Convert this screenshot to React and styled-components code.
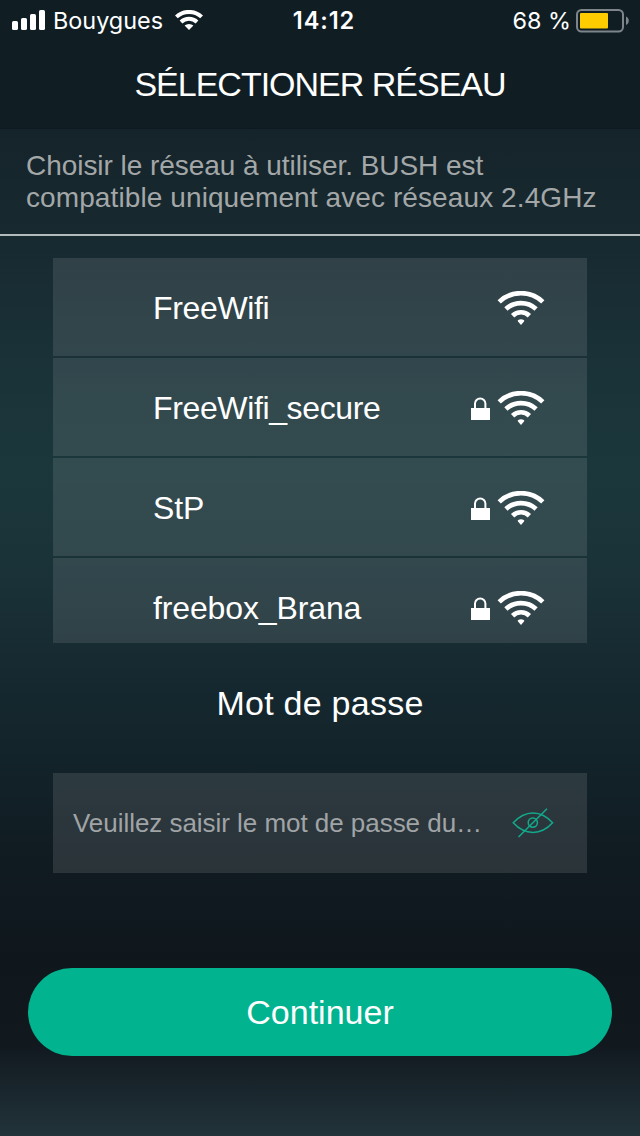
import React from 'react'
import styled, { createGlobalStyle } from 'styled-components'

const networks = [
  { name: 'FreeWifi', locked: false, spacing: '-0.35px' },
  { name: 'FreeWifi_secure', locked: true, spacing: '-0.37px' },
  { name: 'StP', locked: true, spacing: '-0.1px' },
  { name: 'freebox_Brana', locked: true, spacing: '-0.13px' },
]

const SignalIcon = () => (
  <svg width="34" height="20" viewBox="0 0 34 20" fill="#fff">
    <rect x="0" y="11" width="6" height="9" rx="1.6" />
    <rect x="9" y="8" width="6" height="12" rx="1.6" />
    <rect x="18" y="4" width="6" height="16" rx="1.6" />
    <rect x="27" y="0" width="6" height="20" rx="1.6" />
  </svg>
)

const StatusWifiIcon = () => (
  <svg width="28" height="20" viewBox="0 0 28 20" fill="none" stroke="#fff" strokeWidth="4">
    <path d="M1.4 6.9a18.4 18.4 0 0 1 25.2 0" />
    <path d="M6 11.9a12 12 0 0 1 16 0" />
    <path d="M14 20l-4.4-4.4a6.6 6.6 0 0 1 8.8 0z" fill="#fff" stroke="none" />
  </svg>
)

const BatteryIcon = () => (
  <svg width="54" height="24" viewBox="0 0 54 24">
    <rect x="1" y="1" width="46" height="21.5" rx="4.5" fill="none" stroke="#7d858a" strokeWidth="2" />
    <rect x="4" y="4" width="28" height="15.5" rx="1" fill="#ffcc00" />
    <path d="M50 7.5c3.7 1.4 3.7 6.8 0 8.5z" fill="#7d858a" />
  </svg>
)

const WifiIcon = () => (
  <svg width="48" height="34" viewBox="0 0 48 34" fill="none" stroke="#fff" strokeWidth="4.7">
    <path d="M2.2 10.9a31.6 31.6 0 0 1 43.6 0" />
    <path d="M8.9 17.9a22.4 22.4 0 0 1 30.2 0" />
    <path d="M15.6 24.7a12 12 0 0 1 16.8 0" />
    <path d="M24 34l-3-3.4a1 1 0 0 1 .2-1.5 5.4 5.4 0 0 1 5.6 0 1 1 0 0 1 .2 1.5z" fill="#fff" stroke="none" />
  </svg>
)

const LockIcon = () => (
  <svg width="20" height="23" viewBox="0 0 20 23">
    <path d="M5 12V6.6a5.2 5.2 0 0 1 10.4 0V12" fill="none" stroke="#fff" strokeWidth="2" />
    <rect x="1" y="11" width="19" height="12" fill="#fff" />
  </svg>
)

const HiddenEyeIcon = () => (
  <svg width="42" height="30" viewBox="0 0 42 30" fill="none" stroke="#12a98b" strokeWidth="1.5">
    <path d="M1.2 14.8C13 1.6 29 1.6 40.6 14.8 29 27.6 13 27.6 1.2 14.8z" />
    <circle cx="20.8" cy="14.6" r="4.6" />
    <path d="M6.5 29L35 .8" />
  </svg>
)

const App = () => {
  return (
    <Screen>
      <GlobalStyle />
      <Header>
        <StatusBar>
          <Carrier>
            <SignalIcon />
            <StatusText>Bouygues</StatusText>
            <StatusWifiIcon />
          </Carrier>
          <Clock>14:12</Clock>
          <Battery>
            <StatusText>68 %</StatusText>
            <BatteryIcon />
          </Battery>
        </StatusBar>
        <Title>SÉLECTIONER RÉSEAU</Title>
      </Header>

      <Notice>
        <NoticeLine $spacing="-0.05px">Choisir le réseau à utiliser. BUSH est</NoticeLine>
        <NoticeLine $spacing="0.1px">compatible uniquement avec réseaux 2.4GHz</NoticeLine>
      </Notice>

      <NetworkList>
        {networks.map((network) => (
          <NetworkRow key={network.name}>
            <NetworkName $spacing={network.spacing}>{network.name}</NetworkName>
            {network.locked && <LockIcon />}
            <WifiIcon />
          </NetworkRow>
        ))}
      </NetworkList>

      <PasswordLabel>Mot de passe</PasswordLabel>

      <PasswordField>
        <Placeholder>Veuillez saisir le mot de passe du…</Placeholder>
        <HiddenEyeIcon />
      </PasswordField>

      <ContinueButton>Continuer</ContinueButton>
    </Screen>
  )
}

export default App

const GlobalStyle = createGlobalStyle`
  * {
    box-sizing: border-box;
  }

  body {
    margin: 0;
    background: #10191f;
  }

  svg {
    display: block;
    flex: none;
  }
`

const Screen = styled.div`
  display: flex;
  flex-direction: column;
  width: 640px;
  height: 1136px;
  overflow: hidden;
  color: #fff;
  font-family: "Liberation Sans", Arial, sans-serif;
  background: linear-gradient(
    180deg,
    #142128 0px,
    #15242a 129px,
    #182a31 250px,
    #1a3339 380px,
    #1b373c 470px,
    #1a3339 560px,
    #172a31 660px,
    #13232a 760px,
    #101b21 860px,
    #0f171c 960px,
    #11191f 1045px,
    #22333a 1136px
  );
`

const Header = styled.header`
  height: 129px;
  background: #101e24;
  border-bottom: 1px solid #0e1a20;
`

const StatusBar = styled.div`
  display: grid;
  grid-template-columns: 1fr auto 1fr;
  align-items: center;
  height: 40px;
  padding: 0 10px 0 12px;
  font-family: Inter, sans-serif;
  font-size: 23.4px;
`

const Carrier = styled.div`
  display: flex;
  align-items: center;

  svg:last-child {
    margin-left: 12px;
  }
`

const StatusText = styled.span`
  margin-left: 7px;
  white-space: nowrap;
`

const Clock = styled.div`
  padding-left: 6px;
  font-size: 23.6px;
  font-weight: 600;
  letter-spacing: 0.9px;
`

const Battery = styled.div`
  display: flex;
  align-items: center;
  justify-content: flex-end;
  gap: 5px;

  svg {
    margin-top: 1px;
  }
`

const Title = styled.h1`
  margin: 0;
  padding-top: 25px;
  text-align: center;
  font-size: 34px;
  font-weight: 400;
  line-height: 38px;
  letter-spacing: -1px;
`

const Notice = styled.section`
  height: 107px;
  padding: 21px 26px 0;
  border-bottom: 2px solid #b3babb;
  color: #a3a7a8;
  font-size: 28px;
  line-height: 32px;
`

const NoticeLine = styled.div`
  white-space: nowrap;
  letter-spacing: ${(props) => props.$spacing};
`

const NetworkList = styled.ul`
  display: flex;
  flex-direction: column;
  gap: 2px;
  height: 385px;
  margin: 22px 53px 0;
  padding: 0;
  overflow: hidden;
  list-style: none;
`

const NetworkRow = styled.li`
  display: flex;
  flex: none;
  align-items: center;
  gap: 7px;
  height: 98px;
  padding: 2px 42px 0 100px;
  background: rgba(255, 255, 255, 0.105);
`

const NetworkName = styled.span`
  flex: 1;
  font-size: 32px;
  letter-spacing: ${(props) => props.$spacing};
`

const PasswordLabel = styled.h2`
  margin: 40px 0 0;
  text-align: center;
  font-size: 34px;
  font-weight: 400;
  line-height: 40px;
  letter-spacing: 0.25px;
`

const PasswordField = styled.div`
  display: flex;
  align-items: center;
  justify-content: space-between;
  height: 100px;
  margin: 50px 53px 0;
  padding: 0 33px 0 20px;
  background: rgba(255, 255, 255, 0.11);
`

const Placeholder = styled.span`
  color: #a0a4a6;
  font-size: 26px;
  letter-spacing: -0.04px;
  white-space: nowrap;
`

const ContinueButton = styled.button`
  height: 88px;
  margin: 95px 28px 0;
  border: 0;
  border-radius: 44px;
  background: #02b38f;
  color: #fff;
  font-family: inherit;
  font-size: 34px;
`
